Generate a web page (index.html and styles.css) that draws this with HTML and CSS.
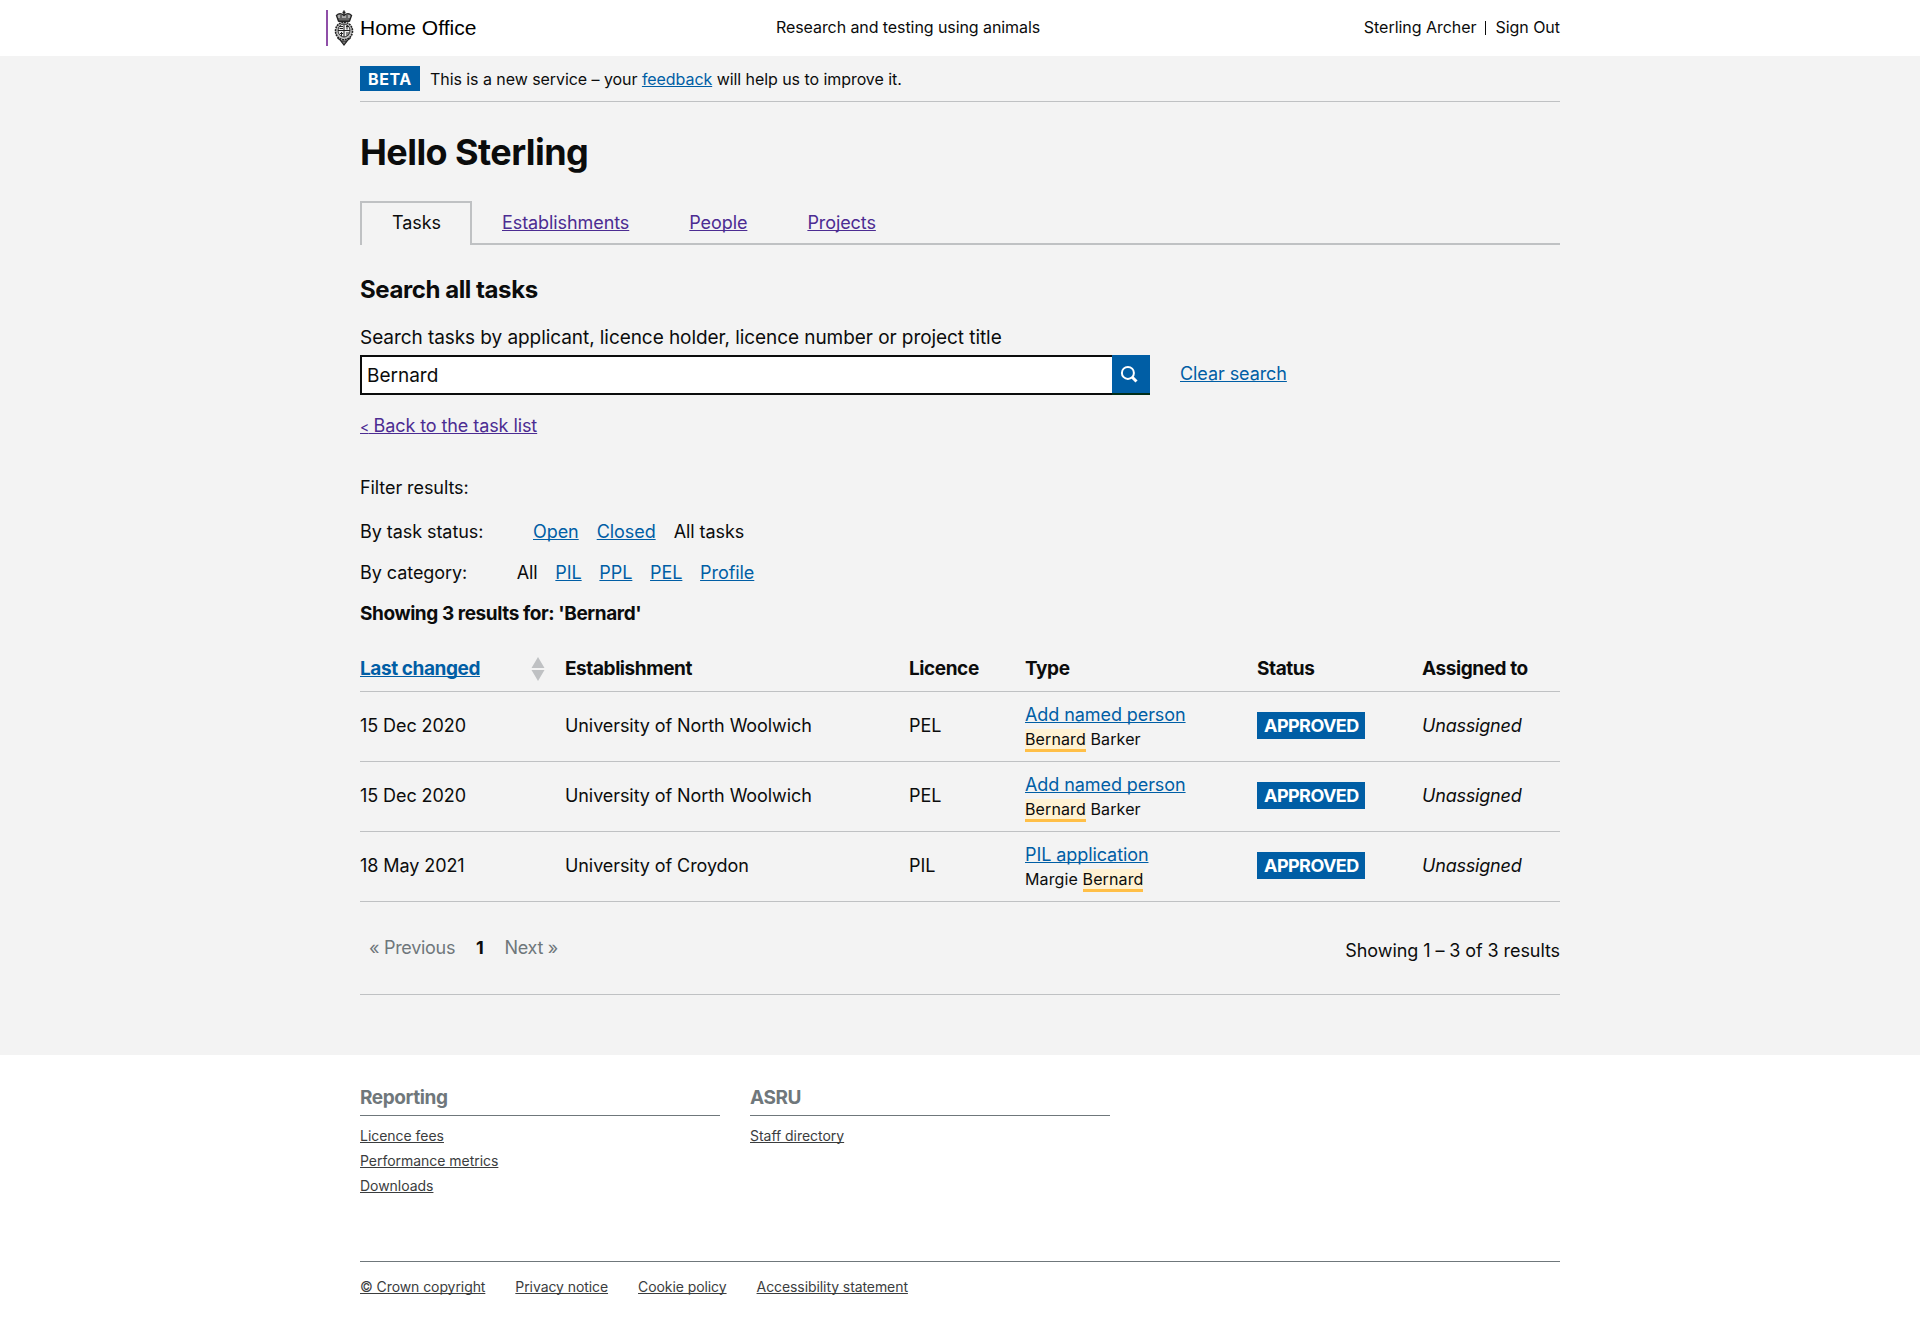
FILE: index.html
```html
<!DOCTYPE html>
<html lang="en">
<head>
<meta charset="utf-8">
<title>Research and testing using animals</title>
<link rel="stylesheet" href="styles.css">
</head>
<body>
<header class="header">
  <div class="container header-row">
    <a class="logo">
      <svg class="crest" width="20" height="36" viewBox="0 0 20 36" fill="none" stroke="#222">
        <path d="M10 .5v5M8.500 2.500h3" stroke-width="1.500"/>
        <path d="M2.500 5.500c2-2 5-2 7.500 0c2.500-2 5.500-2 7.500 0l-2 5.500h-11z" fill="#aaa" stroke-width="1.400"/>
        <path d="M4 9h12M4.500 11.500h11M7 5v3M13 5v3" stroke-width="1"/>
        <ellipse cx="10" cy="21" rx="8.500" ry="8.800" fill="#c4c4c4" stroke-width="1.600" stroke-dasharray="2 .7"/>
        <ellipse cx="10" cy="20.500" rx="6" ry="6.500" fill="#eee" stroke-width=".9"/>
        <path d="M10 14v13M4 20.500h12M5.500 16.500h3.500M5.500 18.500h3.500M12 16.500h3M13 15v4.500M6 23.500h3M7.500 22v4M12 23h3M12 25h2.500" stroke-width="1"/>
        <path d="M3.500 28l4 3M16.500 28l-4 3M7 31h6l-3 4z" fill="#777" stroke-width="1.200"/>
      </svg>
      <span>Home Office</span>
    </a>
    <span class="service">Research and testing using animals</span>
    <nav class="user"><span>Sterling Archer</span><span class="divider"></span><span>Sign Out</span></nav>
  </div>
</header>
<main class="main">
  <div class="container">
    <div class="phase"><strong class="phase-tag">BETA</strong><span class="phase-text">This is a new service – your <a class="link">feedback</a> will help us to improve it.</span></div>
    <h1>Hello Sterling</h1>
    <nav class="tabs">
      <a class="tab active">Tasks</a>
      <a class="tab"><span class="link visited">Establishments</span></a>
      <a class="tab"><span class="link visited">People</span></a>
      <a class="tab"><span class="link visited">Projects</span></a>
    </nav>
    <h2>Search all tasks</h2>
    <label class="search-label" for="q">Search tasks by applicant, licence holder, licence number or project title</label>
    <div class="search">
      <input id="q" class="search-input" type="text" value="Bernard">
      <button class="search-button" aria-label="Search">
        <svg width="18" height="18" viewBox="0 0 18 18" fill="none" stroke="#fff"><circle cx="7.900" cy="7.900" r="6" stroke-width="2"/><path d="M12 12l4.500 4.500" stroke-width="3"/></svg>
      </button>
      <a class="link clear">Clear search</a>
    </div>
    <p class="back"><a class="link visited"><span class="chevron">&lt;</span> Back to the task list</a></p>
    <p class="filter-title">Filter results:</p>
    <div class="filter status-filter"><span class="filter-name">By task status:</span><a class="link">Open</a><a class="link">Closed</a><span>All tasks</span></div>
    <div class="filter category-filter"><span class="filter-name">By category:</span><span>All</span><a class="link">PIL</a><a class="link">PPL</a><a class="link">PEL</a><a class="link">Profile</a></div>
    <h3>Showing 3 results for: 'Bernard'</h3>
    <table class="tasks">
      <colgroup><col class="c-date"><col class="c-est"><col class="c-lic"><col class="c-type"><col class="c-status"><col class="c-assigned"></colgroup>
      <thead><tr>
        <th><span class="sortable"><a class="link">Last changed</a><svg width="14" height="24" viewBox="0 0 14 24" fill="#bfc1c3"><path d="M7 0l6.500 11H.5zM7 24l6.500-11H.5z"/></svg></span></th>
        <th>Establishment</th><th>Licence</th><th>Type</th><th>Status</th><th>Assigned to</th>
      </tr></thead>
      <tbody>
        <tr><td>15 Dec 2020</td><td>University of North Woolwich</td><td>PEL</td><td class="type"><a class="link">Add named person</a><div class="subject"><mark>Bernard</mark> Barker</div></td><td><span class="badge">APPROVED</span></td><td><em>Unassigned</em></td></tr>
        <tr><td>15 Dec 2020</td><td>University of North Woolwich</td><td>PEL</td><td class="type"><a class="link">Add named person</a><div class="subject"><mark>Bernard</mark> Barker</div></td><td><span class="badge">APPROVED</span></td><td><em>Unassigned</em></td></tr>
        <tr><td>18 May 2021</td><td>University of Croydon</td><td>PIL</td><td class="type"><a class="link">PIL application</a><div class="subject">Margie <mark>Bernard</mark></div></td><td><span class="badge">APPROVED</span></td><td><em>Unassigned</em></td></tr>
      </tbody>
    </table>
    <div class="pagination">
      <div class="pages"><span>« Previous</span><strong>1</strong><span>Next »</span></div>
      <span class="count">Showing 1 – 3 of 3 results</span>
    </div>
  </div>
</main>
<footer class="container footer">
  <div class="footer-cols">
    <section><h4>Reporting</h4><ul><li><a>Licence fees</a></li><li><a>Performance metrics</a></li><li><a>Downloads</a></li></ul></section>
    <section><h4>ASRU</h4><ul><li><a>Staff directory</a></li></ul></section>
  </div>
  <nav class="legal"><a>© Crown copyright</a><a>Privacy notice</a><a>Cookie policy</a><a>Accessibility statement</a></nav>
</footer>
</body>
</html>
```
FILE: styles.css
```css
* { box-sizing: border-box; }
body { margin: 0; background: #fff; color: #0b0c0c; font: 18px/25px Inter, "Noto Sans", sans-serif; letter-spacing: -0.08px; }
h1, h2, h3, h4, p, ul { margin: 0; padding: 0; }
ul { list-style: none; }
.container { width: 1200px; margin: 0 auto; }
.link { color: #005ea5; text-decoration: underline; text-decoration-skip-ink: none; }
.visited { color: #4c2c92; }

.header-row { display: grid; grid-template-columns: 416px 1fr auto; align-items: center; height: 56px; font-size: 16px; }
.logo { display: flex; align-items: center; gap: 6px; height: 36px; margin-left: -34px; padding-left: 6px; border-left: 2px solid #8f4fa8; font: 21px/36px "Liberation Sans", Arial, sans-serif; letter-spacing: 0; color: #000; white-space: nowrap; }
.service, .user { padding-bottom: 2px; }
.user { display: flex; align-items: center; letter-spacing: -0.04px; }
.divider { width: 1px; height: 14px; margin: 2px 9px 0; background: #0b0c0c; }

.main { height: 999px; background: #f3f3f3; }
.phase { display: flex; align-items: center; gap: 10px; height: 46px; border-bottom: 1px solid #bfc1c3; font-size: 16px; letter-spacing: -0.06px; }
.phase-tag { height: 25px; width: 60px; padding: 1px 0 0 8px; background: #005ea5; color: #fff; font-weight: 700; letter-spacing: 0.6px; }
.phase-text { padding-top: 2px; }
h1 { margin-top: 30px; font-size: 36px; line-height: 40px; font-weight: 700; letter-spacing: -0.57px; }
.tabs { display: flex; height: 44px; margin-top: 29px; border-bottom: 2px solid #bfc1c3; }
.tab { height: 44px; padding: 9px 30px 10px; }
.tab.active { width: 112px; border: 2px solid #bfc1c3; border-bottom: 0; padding-top: 7px; background: #f3f3f3; }
h2 { margin-top: 30px; font-size: 24px; line-height: 30px; font-weight: 700; letter-spacing: -0.42px; }
.search-label { display: block; margin: 20px 0 5px; font-size: 19px; letter-spacing: -0.065px; }
.search { display: flex; height: 40px; }
.search-input { width: 752px; height: 40px; padding: 0 5px; border: 2px solid #0b0c0c; border-right: 0; border-radius: 0; background: #fff; font: 19px Inter, sans-serif; color: #0b0c0c; outline: 0; }
.search-button { display: flex; align-items: center; justify-content: center; width: 38px; height: 38px; padding: 0 4px 0 0; border: 0; background: #005ea5; box-shadow: 0 2px 0 #002d18; }
.clear { margin: 6px 0 0 30px; height: 25px; }
.back { height: 25px; margin-top: 18px; }
.chevron { font-size: 14px; line-height: 1; letter-spacing: -0.8px; }
.filter-title { margin-top: 37px; }
.filter { display: flex; gap: 18px; letter-spacing: -0.06px; }
.status-filter { margin-top: 19px; }
.category-filter { gap: 17.7px; margin-top: 16px; }
.status-filter .filter-name { width: 155px; }
.category-filter .filter-name { width: 139px; }
h3 { margin-top: 16px; font-size: 19px; line-height: 25px; font-weight: 700; letter-spacing: -0.42px; }

.tasks { width: 1200px; margin-top: 20px; table-layout: fixed; border-collapse: separate; border-spacing: 0; }
.c-date { width: 205px; }
.c-est { width: 344px; }
.c-lic { width: 116px; }
.c-type { width: 232px; }
.c-status { width: 165px; }
.c-assigned { width: 138px; }
.tasks th { padding: 10px 0; font-size: 19px; font-weight: 700; letter-spacing: -0.42px; text-align: left; border-bottom: 1px solid #bfc1c3; }
.sortable { display: flex; align-items: center; justify-content: space-between; padding-right: 20px; }
.tasks td { height: 70px; padding: 0 0 2px; border-bottom: 1px solid #bfc1c3; vertical-align: middle; }
.tasks .type { padding: 10px 0; }
.tasks em { letter-spacing: -0.2px; }
.subject { font-size: 16px; line-height: 24px; letter-spacing: 0.12px; }
mark { background: #fff2d3; color: inherit; border-bottom: 3px solid #ffbf47; }
.badge { display: inline-block; width: 108px; height: 27px; padding: 1px 7px; background: #005ea5; color: #fff; font-weight: 700; letter-spacing: -0.55px; vertical-align: middle; }

.pagination { display: flex; justify-content: space-between; height: 93px; padding: 33px 0 0 9px; border-bottom: 1px solid #bfc1c3; }
.pages { display: flex; gap: 21px; color: #6f777b; letter-spacing: -0.3px; }
.pages strong { color: #0b0c0c; font-weight: 700; }
.count { margin-top: 3px; }

.footer-cols { display: flex; gap: 30px; height: 206px; padding-top: 30px; }
.footer section { width: 360px; }
.footer h4 { height: 31px; border-bottom: 1px solid #6f777b; font-size: 19px; line-height: 25px; font-weight: 700; letter-spacing: -0.42px; color: #6f777b; }
.footer ul { margin-top: 6px; letter-spacing: -0.03px; }
.footer a { font-size: 14px; color: #3b3d3e; text-decoration: underline; text-decoration-skip-ink: none; }
.footer li { height: 25px; }
.legal { display: flex; gap: 30px; padding-top: 12px; border-top: 1px solid #6f777b; }
```
